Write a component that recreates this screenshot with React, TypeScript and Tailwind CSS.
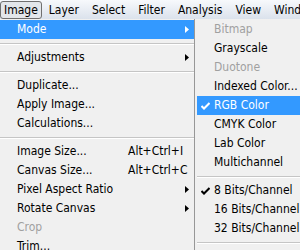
import React from "react";

const font = { fontFamily: '"DejaVu Sans Condensed", "DejaVu Sans", sans-serif' };

function Arrow({ white }: { white?: boolean }) {
  return (
    <svg width="4" height="7" viewBox="0 0 4 7" className="absolute left-[185px] top-[6px]">
      <path d="M0 0 L4 3.5 L0 7 Z" fill={white ? "#ffffff" : "#000000"} />
    </svg>
  );
}

function Check({ white }: { white?: boolean }) {
  return (
    <svg width="9" height="8" viewBox="0 0 9 8" className="absolute left-[4px] top-[6px]">
      <path d="M0.5 4 L3 6.5 L8.5 1" stroke={white ? "#ffffff" : "#000000"} strokeWidth="2" fill="none" />
    </svg>
  );
}

function Sep({ h }: { h: string }) {
  return (
    <div className={`flex flex-col justify-center shrink-0 ${h}`}>
      <div className="h-px bg-[#c5c5c5]" />
      <div className="h-px bg-white" />
    </div>
  );
}

type Item = { label: string; shortcut?: string; arrow?: boolean; disabled?: boolean; active?: boolean };

function MainRow({ item }: { item: Item }) {
  return (
    <div
      className={`relative h-[19px] shrink-0 whitespace-nowrap text-[12px] leading-[19px] pl-[17px] ${
        item.active ? "bg-[#3399ff] text-white" : item.disabled ? "text-[#a0a0a0]" : "text-black"
      }`}
    >
      {item.label}
      {item.shortcut && <span className="absolute left-[128px] top-0">{item.shortcut}</span>}
      {item.arrow && <Arrow white={item.active} />}
    </div>
  );
}

function SubRow({ label, disabled, active, checked }: { label: string; disabled?: boolean; active?: boolean; checked?: boolean }) {
  return (
    <div
      className={`relative h-[19px] shrink-0 whitespace-nowrap text-[12px] leading-[19px] pl-[17px] ${
        active ? "bg-[#3399ff] text-white" : disabled ? "text-[#a0a0a0]" : "text-black"
      }`}
    >
      {checked && <Check white={active} />}
      {label}
    </div>
  );
}

export default function App() {
  const bar = ["Layer", "Select", "Filter", "Analysis", "View", "Window"];
  return (
    <div className="w-[300px] h-[250px] overflow-hidden bg-[#f0f0f0] flex flex-col" style={font}>
      <div className="h-[19px] flex items-center gap-[13px] whitespace-nowrap bg-gradient-to-b from-[#f7f9fc] to-[#dbe2ec] text-[12px] text-black shrink-0">
        <div className="h-[18px] px-[3px] flex items-center border border-[#707070] rounded-[3px] bg-[#e3e6ea] mr-[-6px]">
          Image
        </div>
        {bar.map((b) => (
          <div key={b} className="flex items-center">
            {b}
          </div>
        ))}
      </div>
      <div className="flex flex-1 min-h-0">
        <div className="w-[194px] flex flex-col pt-[1px]">
          <MainRow item={{ label: "Mode", arrow: true, active: true }} />
          <Sep h="h-[9px]" />
          <MainRow item={{ label: "Adjustments", arrow: true }} />
          <Sep h="h-[9px]" />
          <MainRow item={{ label: "Duplicate..." }} />
          <MainRow item={{ label: "Apply Image..." }} />
          <MainRow item={{ label: "Calculations..." }} />
          <Sep h="h-[9px]" />
          <MainRow item={{ label: "Image Size...", shortcut: "Alt+Ctrl+I" }} />
          <MainRow item={{ label: "Canvas Size...", shortcut: "Alt+Ctrl+C" }} />
          <MainRow item={{ label: "Pixel Aspect Ratio", arrow: true }} />
          <MainRow item={{ label: "Rotate Canvas", arrow: true }} />
          <MainRow item={{ label: "Crop", disabled: true }} />
          <MainRow item={{ label: "Trim..." }} />
        </div>
        <div className="flex-1 border-l border-[#979797] flex flex-col pt-[1px] pl-[2px]">
          <SubRow label="Bitmap" disabled />
          <SubRow label="Grayscale" />
          <SubRow label="Duotone" disabled />
          <SubRow label="Indexed Color..." />
          <SubRow label="RGB Color" active checked />
          <SubRow label="CMYK Color" />
          <SubRow label="Lab Color" />
          <SubRow label="Multichannel" />
          <Sep h="h-[9px]" />
          <SubRow label="8 Bits/Channel" checked />
          <SubRow label="16 Bits/Channel" />
          <SubRow label="32 Bits/Channel" />
          <Sep h="h-[9px]" />
        </div>
      </div>
    </div>
  );
}
